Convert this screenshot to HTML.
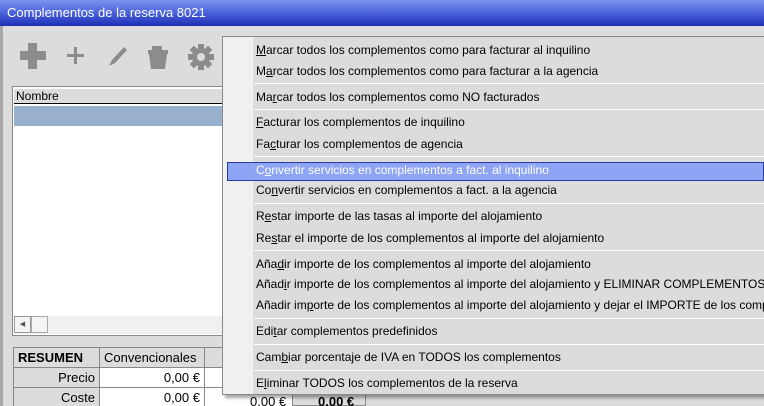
<!DOCTYPE html>
<html><head><meta charset="utf-8"><style>
*{margin:0;padding:0;box-sizing:border-box}
html,body{width:764px;height:406px;overflow:hidden}
body{background:#dcdcdc;font-family:"Liberation Sans",sans-serif;font-size:12px;position:relative;color:#000}
.a{position:absolute}
#title{left:0;top:0;width:764px;height:26px;background:linear-gradient(#7d92ee,#4a62dc 50%,#1d2fb4);color:#fff;font-size:13px;padding:5px 0 0 7px}
#wl{left:0;top:26px;width:3px;height:380px;background:#a8a8a8}
.menu{left:222px;top:36px;width:542px;height:359px;background:#dcdcdc;border:1px solid #8a8a8a;border-right:none;box-shadow:3px 3px 3px rgba(0,0,0,.35);overflow:hidden}
.gut{left:0;top:0;width:30px;height:100%;background:#f0f0f0}
.it{position:absolute;left:33px;height:20px;line-height:20px;white-space:nowrap;font-size:12px}
.sep{position:absolute;left:31px;right:0;height:1px;background:#9a9a9a;border-bottom:1px solid #fff}
.hl{position:absolute;left:4px;right:0;top:125px;height:19px;background:#8ea4f4;border:1px solid #2b3aa0}
u{text-decoration:underline}
table{border-collapse:collapse}
td{border:1px solid #888;height:20px;padding:0 4px;font-size:13px}
</style></head><body>
<div id="title" class="a">Complementos de la reserva 8021</div>
<div id="wl" class="a"></div>
<svg class="a" style="left:16px;top:40px" width="200" height="32">
<g fill="#8c8c8c"><rect x="4" y="11" width="26" height="9"/><rect x="12" y="3" width="9" height="26"/>
<rect x="51" y="14" width="17" height="3"/><rect x="58" y="7" width="3" height="17"/>
<path d="M93 26l3-6 12-13 3 3-12 13z"/>
<rect x="132" y="10" width="20" height="4"/><path d="M133 14h18l-2 15h-14z" /><rect x="136" y="6" width="10" height="4"/>
<circle cx="185" cy="17" r="9"/><rect x="182" y="4" width="6" height="26"/><rect x="172" y="14" width="26" height="6"/>
<rect x="182" y="4" width="6" height="26" transform="rotate(45 185 17)"/><rect x="182" y="4" width="6" height="26" transform="rotate(-45 185 17)"/></g>
<circle cx="185" cy="17" r="4" fill="#dcdcdc"/>
</svg>
<div class="a" style="left:12px;top:86px;width:212px;height:250px;background:#fff;border:1px solid #8a8a8a"></div>
<div class="a" style="left:14px;top:89px;width:210px;height:15px;background:#dcdcdc;border-bottom:1px solid #000;font-size:12px;line-height:15px;padding-left:2px">Nombre</div>
<div class="a" style="left:14px;top:106px;width:210px;height:20px;background:#98b0cc"></div>
<div class="a" style="left:14px;top:316px;width:210px;height:18px;background:#f0f0f0"></div>
<div class="a" style="left:14px;top:316px;width:17px;height:17px;background:#f4f4f4;border:1px solid #999;font-size:7px;line-height:15px;text-align:center;color:#555">◀</div>
<div class="a" style="left:31px;top:316px;width:17px;height:17px;background:#f4f4f4;border:1px solid #aaa"></div>
<table class="a" style="left:13px;top:347px;background:#fff">
<tr><td style="width:86px;background:#dcdcdc;font-weight:bold">RESUMEN</td><td style="width:105px;background:#dcdcdc">Convencionales</td><td style="width:160px;background:#dcdcdc"></td></tr>
<tr><td style="background:#dcdcdc;text-align:right">Precio</td><td style="text-align:right">0,00 €</td><td></td></tr>
<tr><td style="background:#dcdcdc;text-align:right">Coste</td><td style="text-align:right">0,00 €</td><td></td></tr>
</table>
<div class="a" style="left:250px;top:394px;font-size:13px">0,00 €</div>
<div class="a" style="left:292px;top:390px;width:74px;height:16px;background:#dcdcdc;border:1px solid #888"></div>
<div class="a" style="left:318px;top:394px;font-size:13px;font-weight:bold">0,00 €</div>
<div class="a menu">
<div class="a gut"></div>
<div class="hl"></div>
<div class="it" style="top:3px"><u>M</u>arcar todos los complementos como para facturar al inquilino</div>
<div class="it" style="top:24px">M<u>a</u>rcar todos los complementos como para facturar a la agencia</div>
<div class="sep" style="top:46px"></div>
<div class="it" style="top:50px">Ma<u>r</u>car todos los complementos como NO facturados</div>
<div class="sep" style="top:72px"></div>
<div class="it" style="top:75px"><u>F</u>acturar los complementos de inquilino</div>
<div class="it" style="top:97px">Fa<u>c</u>turar los complementos de agencia</div>
<div class="sep" style="top:119px"></div>
<div class="it" style="top:123px;color:#fff">C<u>o</u>nvertir servicios en complementos a fact. al inquilino</div>
<div class="it" style="top:143px">Co<u>n</u>vertir servicios en complementos a fact. a la agencia</div>
<div class="sep" style="top:166px"></div>
<div class="it" style="top:169px">R<u>e</u>star importe de las tasas al importe del alojamiento</div>
<div class="it" style="top:191px">Re<u>s</u>tar el importe de los complementos al importe del alojamiento</div>
<div class="sep" style="top:213px"></div>
<div class="it" style="top:217px">Aña<u>d</u>ir importe de los complementos al importe del alojamiento</div>
<div class="it" style="top:237px">Añad<u>i</u>r importe de los complementos al importe del alojamiento y ELIMINAR COMPLEMENTOS</div>
<div class="it" style="top:258px">Añadir im<u>p</u>orte de los complementos al importe del alojamiento y dejar el IMPORTE de los complementos</div>
<div class="sep" style="top:281px"></div>
<div class="it" style="top:284px">Edi<u>t</u>ar complementos predefinidos</div>
<div class="sep" style="top:307px"></div>
<div class="it" style="top:310px">Cam<u>b</u>iar porcentaje de IVA en TODOS los complementos</div>
<div class="sep" style="top:333px"></div>
<div class="it" style="top:336px">E<u>l</u>iminar TODOS los complementos de la reserva</div>
</div>
</body></html>
